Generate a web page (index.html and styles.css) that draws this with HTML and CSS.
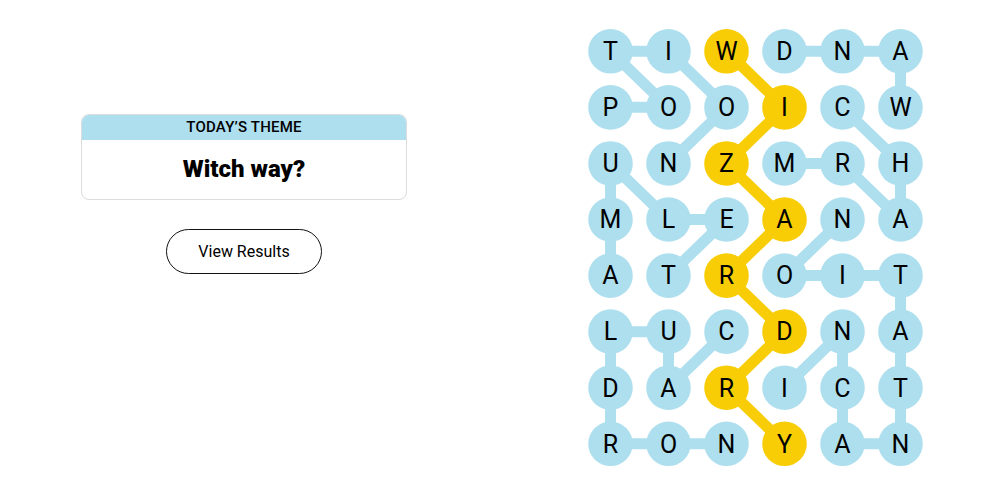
FILE: index.html
```html
<!DOCTYPE html>
<html lang="en">

<head>
    <meta charset="UTF-8">
    <meta name="viewport" content="width=device-width, initial-scale=1.0">
    <title>Strands</title>
    <link rel="stylesheet" href="styles.css">
</head>

<body>
    <div class="game">
        <!-- Theme + results -->
        <div class="side-panel">
            <div class="theme-card">
                <div class="theme-label">TODAY’S THEME</div>
                <div class="theme-title">Witch way?</div>
            </div>
            <button class="results-btn">View Results</button>
        </div>

        <!-- Letter board -->
        <svg class="board" id="board" width="336" height="440" viewBox="0 0 336 440"></svg>
    </div>

    <script>
        const rows = ['TIWDNA', 'POOICW', 'UNZMRH', 'MLEANA', 'ATROIT', 'LUCDNA', 'DARICT', 'RONYAN'];

        // found words, as [col, row] paths
        const words = [
            { cells: [[0, 1], [1, 1], [0, 0], [1, 0], [2, 1], [1, 2]] },
            { cells: [[5, 1], [5, 0], [4, 0], [3, 0]] },
            { cells: [[4, 1], [5, 2], [5, 3], [4, 2], [3, 2]] },
            { cells: [[0, 4], [0, 3], [0, 2], [1, 3], [2, 3], [1, 4]] },
            { cells: [[3, 6], [4, 5], [4, 6], [4, 7], [5, 7], [5, 6], [5, 5], [5, 4], [4, 4], [3, 4], [4, 3]] },
            { cells: [[2, 5], [1, 6], [1, 5], [0, 5], [0, 6], [0, 7], [1, 7], [2, 7]] },
            { cells: [[2, 0], [3, 1], [2, 2], [3, 3], [2, 4], [3, 5], [2, 6], [3, 7]], spangram: true }
        ];

        const ns = 'http://www.w3.org/2000/svg';
        const board = document.getElementById('board');
        const cx = col => 22.5 + col * 58;
        const cy = row => 22.3 + row * 56.07;

        function el(tag, attrs) {
            const node = document.createElementNS(ns, tag);
            for (const key in attrs) node.setAttribute(key, attrs[key]);
            return node;
        }

        const spanCells = {};
        words.forEach(word => {
            const points = word.cells.map(c => cx(c[0]) + ',' + cy(c[1])).join(' ');
            board.appendChild(el('polyline', {
                points,
                class: word.spangram ? 'link link-span' : 'link'
            }));
            if (word.spangram) word.cells.forEach(c => spanCells[c.join('-')] = true);
        });

        rows.forEach((letters, r) => {
            letters.split('').forEach((letter, c) => {
                const span = spanCells[c + '-' + r];
                board.appendChild(el('circle', {
                    cx: cx(c), cy: cy(r), r: 22.3,
                    class: span ? 'cell cell-span' : 'cell'
                }));
                const text = el('text', { x: cx(c), y: cy(r) + 8.8, class: 'cell-letter' });
                text.textContent = letter;
                board.appendChild(text);
            });
        });
    </script>
</body>

</html>
```

FILE: styles.css
```css
body {
    margin: 0;
    font-family: Roboto, "Liberation Sans", Arial, sans-serif;
    color: #000;
    background: #fff;
}

.game {
    display: flex;
    align-items: flex-start;
    padding: 29px 0 0 81px;
}

.side-panel {
    width: 326px;
    margin-top: 85px;
    margin-right: 181px;
    display: flex;
    flex-direction: column;
    align-items: center;
}

.theme-card {
    width: 100%;
    box-sizing: border-box;
    border: 1px solid #dcdcdc;
    border-radius: 8px;
    overflow: hidden;
    text-align: center;
}

.theme-label {
    background-color: #aedfee;
    height: 25px;
    line-height: 25px;
    font-size: 15px;
    font-weight: 500;
    letter-spacing: 0.2px;
}

.theme-title {
    height: 59px;
    line-height: 58px;
    font-size: 24px;
    font-weight: 900;
}

.results-btn {
    margin-top: 29px;
    width: 156px;
    height: 45px;
    border: 1px solid #121212;
    border-radius: 23px;
    background: #fff;
    color: #000;
    font-family: Roboto, "Liberation Sans", Arial, sans-serif;
    font-size: 16px;
    cursor: pointer;
}

.board {
    display: block;
}

.link {
    fill: none;
    stroke: #aedfee;
    stroke-width: 11;
    stroke-linejoin: round;
}

.link-span {
    stroke: #f8cd05;
}

.cell {
    fill: #aedfee;
}

.cell-span {
    fill: #f8cd05;
}

.cell-letter {
    font-family: Roboto, "Liberation Sans", Arial, sans-serif;
    font-size: 25px;
    text-anchor: middle;
    fill: #000;
}
```
